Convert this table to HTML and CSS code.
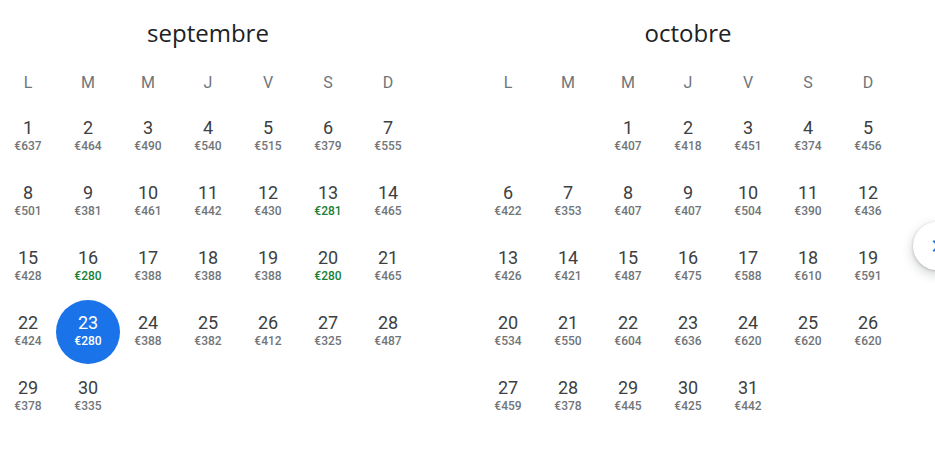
FILE: index.html
```html
<!DOCTYPE html>
<html lang="fr">
<head>
<meta charset="utf-8">
<link rel="stylesheet" href="styles.css">
</head>
<body>
<div class="cal">
  <section class="month">
    <h2 class="title">septembre</h2>
    <div class="grid">
      <div class="wd">L</div><div class="wd">M</div><div class="wd">M</div><div class="wd">J</div><div class="wd">V</div><div class="wd">S</div><div class="wd">D</div>
      <div class="day"><span class="n">1</span><span class="p">€637</span></div>
      <div class="day"><span class="n">2</span><span class="p">€464</span></div>
      <div class="day"><span class="n">3</span><span class="p">€490</span></div>
      <div class="day"><span class="n">4</span><span class="p">€540</span></div>
      <div class="day"><span class="n">5</span><span class="p">€515</span></div>
      <div class="day"><span class="n">6</span><span class="p">€379</span></div>
      <div class="day"><span class="n">7</span><span class="p">€555</span></div>
      <div class="day"><span class="n">8</span><span class="p">€501</span></div>
      <div class="day"><span class="n">9</span><span class="p">€381</span></div>
      <div class="day"><span class="n">10</span><span class="p">€461</span></div>
      <div class="day"><span class="n">11</span><span class="p">€442</span></div>
      <div class="day"><span class="n">12</span><span class="p">€430</span></div>
      <div class="day"><span class="n">13</span><span class="p low">€281</span></div>
      <div class="day"><span class="n">14</span><span class="p">€465</span></div>
      <div class="day"><span class="n">15</span><span class="p">€428</span></div>
      <div class="day"><span class="n">16</span><span class="p low">€280</span></div>
      <div class="day"><span class="n">17</span><span class="p">€388</span></div>
      <div class="day"><span class="n">18</span><span class="p">€388</span></div>
      <div class="day"><span class="n">19</span><span class="p">€388</span></div>
      <div class="day"><span class="n">20</span><span class="p low">€280</span></div>
      <div class="day"><span class="n">21</span><span class="p">€465</span></div>
      <div class="day"><span class="n">22</span><span class="p">€424</span></div>
      <div class="day selected"><span class="n">23</span><span class="p">€280</span></div>
      <div class="day"><span class="n">24</span><span class="p">€388</span></div>
      <div class="day"><span class="n">25</span><span class="p">€382</span></div>
      <div class="day"><span class="n">26</span><span class="p">€412</span></div>
      <div class="day"><span class="n">27</span><span class="p">€325</span></div>
      <div class="day"><span class="n">28</span><span class="p">€487</span></div>
      <div class="day"><span class="n">29</span><span class="p">€378</span></div>
      <div class="day"><span class="n">30</span><span class="p">€335</span></div>
    </div>
  </section>
  <section class="month">
    <h2 class="title">octobre</h2>
    <div class="grid">
      <div class="wd">L</div><div class="wd">M</div><div class="wd">M</div><div class="wd">J</div><div class="wd">V</div><div class="wd">S</div><div class="wd">D</div>
      <div class="day empty"></div>
      <div class="day empty"></div>
      <div class="day"><span class="n">1</span><span class="p">€407</span></div>
      <div class="day"><span class="n">2</span><span class="p">€418</span></div>
      <div class="day"><span class="n">3</span><span class="p">€451</span></div>
      <div class="day"><span class="n">4</span><span class="p">€374</span></div>
      <div class="day"><span class="n">5</span><span class="p">€456</span></div>
      <div class="day"><span class="n">6</span><span class="p">€422</span></div>
      <div class="day"><span class="n">7</span><span class="p">€353</span></div>
      <div class="day"><span class="n">8</span><span class="p">€407</span></div>
      <div class="day"><span class="n">9</span><span class="p">€407</span></div>
      <div class="day"><span class="n">10</span><span class="p">€504</span></div>
      <div class="day"><span class="n">11</span><span class="p">€390</span></div>
      <div class="day"><span class="n">12</span><span class="p">€436</span></div>
      <div class="day"><span class="n">13</span><span class="p">€426</span></div>
      <div class="day"><span class="n">14</span><span class="p">€421</span></div>
      <div class="day"><span class="n">15</span><span class="p">€487</span></div>
      <div class="day"><span class="n">16</span><span class="p">€475</span></div>
      <div class="day"><span class="n">17</span><span class="p">€588</span></div>
      <div class="day"><span class="n">18</span><span class="p">€610</span></div>
      <div class="day"><span class="n">19</span><span class="p">€591</span></div>
      <div class="day"><span class="n">20</span><span class="p">€534</span></div>
      <div class="day"><span class="n">21</span><span class="p">€550</span></div>
      <div class="day"><span class="n">22</span><span class="p">€604</span></div>
      <div class="day"><span class="n">23</span><span class="p">€636</span></div>
      <div class="day"><span class="n">24</span><span class="p">€620</span></div>
      <div class="day"><span class="n">25</span><span class="p">€620</span></div>
      <div class="day"><span class="n">26</span><span class="p">€620</span></div>
      <div class="day"><span class="n">27</span><span class="p">€459</span></div>
      <div class="day"><span class="n">28</span><span class="p">€378</span></div>
      <div class="day"><span class="n">29</span><span class="p">€445</span></div>
      <div class="day"><span class="n">30</span><span class="p">€425</span></div>
      <div class="day"><span class="n">31</span><span class="p">€442</span></div>
    </div>
  </section>
</div>
<button class="next" aria-label="Mois suivant">
  <svg width="24" height="24" viewBox="0 0 24 24"><path d="M10 6 8.59 7.41 13.17 12l-4.58 4.59L10 18l6-6z" fill="#1a73e8"/></svg>
</button>
</body>
</html>
```
FILE: styles.css
```css
html, body {
  margin: 0;
  padding: 0;
  background: #fff;
}
body {
  width: 935px;
  height: 466px;
  overflow: hidden;
  position: relative;
  font-family: Roboto, "Liberation Sans", sans-serif;
  color: #3c4043;
}
.cal {
  display: flex;
  gap: 60px;
  margin-left: -2px;
}
.month {
  width: 420px;
}
.title {
  margin: 0;
  padding: 19px 0 12px;
  height: 28px;
  line-height: 28px;
  text-align: center;
  font-family: "Open Sans", Roboto, sans-serif;
  font-size: 24px;
  font-weight: 400;
  color: #202124;
}
.grid {
  display: grid;
  grid-template-columns: repeat(7, 60px);
  grid-auto-rows: 65px;
  grid-template-rows: 46px;
}
.wd {
  display: flex;
  align-items: center;
  justify-content: center;
  font-size: 16px;
  color: #70757a;
}
.day {
  display: flex;
  flex-direction: column;
  align-items: center;
  padding-top: 13px;
  box-sizing: border-box;
}
.n {
  font-size: 18px;
  line-height: 20px;
  color: #3c4043;
}
.p {
  font-size: 12px;
  line-height: 16px;
  font-weight: 500;
  color: #70757a;
}
.p.low {
  color: #188038;
}
.selected {
  position: relative;
  z-index: 0;
}
.selected::before {
  content: "";
  position: absolute;
  z-index: -1;
  left: -2px;
  top: 0;
  width: 64px;
  height: 64px;
  border-radius: 50%;
  background: #1a73e8;
}
.selected .n,
.selected .p {
  color: #fff;
}
.next {
  position: absolute;
  left: 913px;
  top: 222px;
  width: 48px;
  height: 48px;
  padding: 0 0 0 11px;
  border: none;
  border-radius: 50%;
  background: #fff;
  box-shadow: 0 1px 3px rgba(60,64,67,.3), 0 4px 8px 3px rgba(60,64,67,.15);
  display: flex;
  align-items: center;
}
```
